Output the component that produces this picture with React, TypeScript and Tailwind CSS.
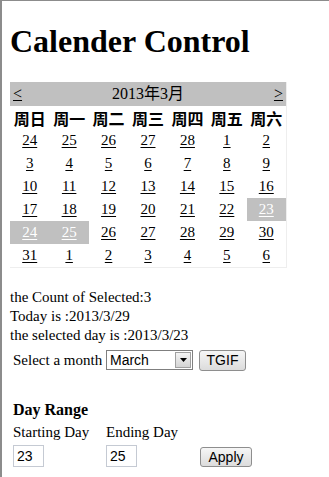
const weeks: number[][] = [
  [24, 25, 26, 27, 28, 1, 2],
  [3, 4, 5, 6, 7, 8, 9],
  [10, 11, 12, 13, 14, 15, 16],
  [17, 18, 19, 20, 21, 22, 23],
  [24, 25, 26, 27, 28, 29, 30],
  [31, 1, 2, 3, 4, 5, 6],
];

const dayNames = ["周日", "周一", "周二", "周三", "周四", "周五", "周六"];

// selected: 3/23, 3/24, 3/25
const isSelected = (w: number, d: number) =>
  (w === 3 && d === 6) || (w === 4 && (d === 0 || d === 1));

const App = () => {
  return (
    <div className="min-h-screen border-t border-l-2 border-[#8c8c8c] bg-white pl-2 font-['Liberation_Serif','Noto_Sans_CJK_SC',serif] text-[15px] text-black">
      <h1 className="pt-[22px] text-[32px] font-bold leading-[37px]">Calender Control</h1>

      <div className="mt-[22px] w-[277px] border-r border-b border-[#eeeeee]">
        <div className="flex h-[24px] items-center justify-between bg-[#c0c0c0] px-[3px] text-[16px] leading-none">
          <span className="underline">&lt;</span>
          <span>2013年3月</span>
          <span className="underline">&gt;</span>
        </div>
        <div className="grid h-[23px] grid-cols-7 items-center font-['Noto_Sans_CJK_SC',sans-serif] text-[16px] font-bold leading-none">
          {dayNames.map((n) => (
            <div key={n} className="text-center">
              {n}
            </div>
          ))}
        </div>
        {weeks.map((week, w) => (
          <div key={w} className="grid grid-cols-7">
            {week.map((day, d) => (
              <div
                key={d}
                className={
                  isSelected(w, d)
                    ? "flex h-[23px] items-center justify-center bg-[#c0c0c0] text-white"
                    : "flex h-[23px] items-center justify-center"
                }
              >
                <span className="underline underline-offset-2">{day}</span>
              </div>
            ))}
          </div>
        ))}
      </div>

      <div className="mt-[20px] leading-[19px]">
        <p>the Count of Selected:3</p>
        <p>Today is :2013/3/29</p>
        <p>the selected day is :2013/3/23</p>
      </div>

      <div className="mt-[4px] grid h-[21px] grid-cols-[93px_93px_auto] items-center pl-[3px]">
        <span className="whitespace-nowrap">Select a month</span>
        <div className="flex h-[20px] w-[87px] items-center border border-[#7f7f7f] bg-white font-['Liberation_Sans',sans-serif] text-[14px]">
          <span className="flex-1 pl-[3px] leading-none">March</span>
          <span className="m-[1px] flex h-[16px] w-[16px] items-center justify-center border border-[#a0a0a0] bg-gradient-to-b from-[#f4f4f4] to-[#d4d4d4]">
            <svg width="7" height="4" viewBox="0 0 7 4">
              <path d="M0 0h7L3.5 4z" fill="#000" />
            </svg>
          </span>
        </div>
        <button className="h-[21px] w-[47px] rounded-[3px] border border-[#8e8e8e] bg-gradient-to-b from-[#f6f6f6] to-[#dcdcdc] font-['Liberation_Sans',sans-serif] text-[14px] leading-none">
          TGIF
        </button>
      </div>

      <div className="mt-[30px] pl-[3px]">
        <h4 className="text-[16px] font-bold leading-[19px]">Day Range</h4>
        <div className="mt-[4px] grid grid-cols-[93px_93px_auto] leading-[19px]">
          <span>Starting Day</span>
          <span>Ending Day</span>
          <span />
        </div>
        <div className="mt-[3px] grid grid-cols-[93px_93px_auto] items-center">
          <input
            defaultValue="23"
            className="h-[22px] w-[31px] border border-[#c5cad3] px-[3px] font-['Liberation_Sans',sans-serif] text-[14px] outline-none"
          />
          <input
            defaultValue="25"
            className="h-[22px] w-[31px] border border-[#c5cad3] px-[3px] font-['Liberation_Sans',sans-serif] text-[14px] outline-none"
          />
          <button className="ml-[1px] mt-[2px] h-[20px] w-[52px] rounded-[3px] border border-[#8e8e8e] bg-gradient-to-b from-[#f6f6f6] to-[#dcdcdc] font-['Liberation_Sans',sans-serif] text-[14px] leading-none">
            Apply
          </button>
        </div>
      </div>
    </div>
  );
};

export default App;
